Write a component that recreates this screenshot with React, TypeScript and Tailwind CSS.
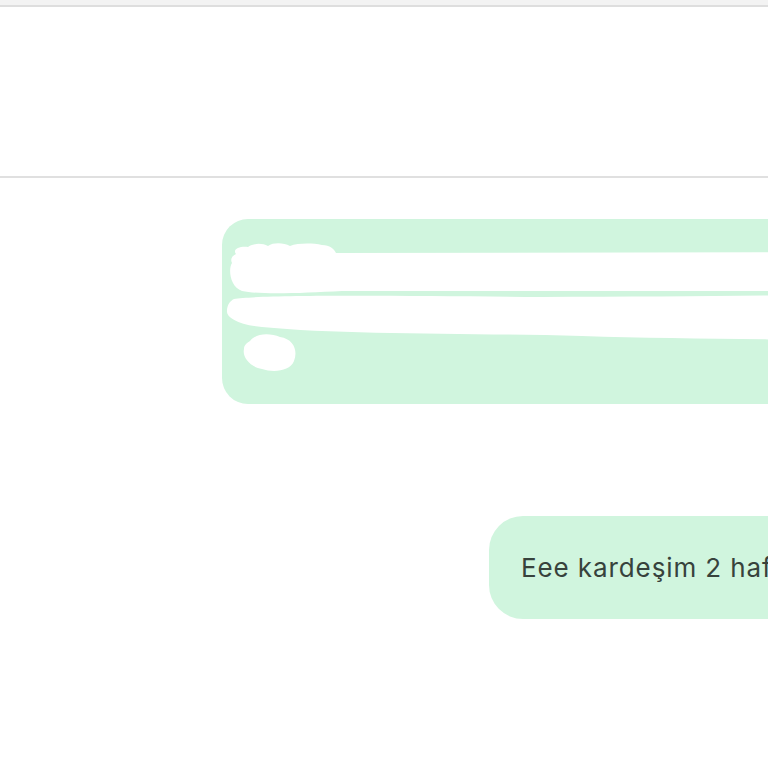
export default function App() {
  return (
    <div className="h-[768px] w-[768px] overflow-hidden bg-white font-['Inter',sans-serif]">
      {/* top bar */}
      <div className="h-[5px] bg-[#f3f3f3]" />
      <div className="h-[2px] bg-[#dedede]" />
      <div className="h-[169px] bg-white" />
      <div className="h-[2px] bg-[#e0e0e0]" />

      <div className="flex flex-col pt-[41px]">
        <div className="relative ml-[222px] h-[185px] w-[640px] shrink-0 rounded-[26px] bg-[#d0f5de]">
          <svg className="absolute left-0 top-0" width="640" height="185" viewBox="0 0 640 185">
            <g fill="#ffffff">
              <path d="M14 35 C 10 30 18 27 26 28 C 32 24 40 24 46 27 C 52 23 62 24 68 27 C 76 24 90 24 100 26 C 108 26 112 30 114 34 L 640 33 L 640 72 L 120 72 C 80 74 40 76 20 72 C 8 68 6 50 10 44 C 8 40 10 37 14 35 Z" />
              <path d="M12 80 C 40 75 200 77 320 78 C 450 78 560 76 640 76 L 640 122 C 560 120 450 120 360 117 C 250 114 120 116 40 108 C 16 106 4 98 5 92 C 5 86 8 82 12 80 Z" />
              <path d="M28 122 C 34 114 48 114 58 118 C 72 120 76 132 72 142 C 68 152 52 154 40 150 C 28 148 20 138 22 130 C 22 126 25 124 28 122 Z" />
            </g>
          </svg>
        </div>

        <div className="ml-[489px] mt-[112px] flex h-[103px] w-[420px] shrink-0 items-center rounded-[34px] bg-[#d0f5de] pl-[32px]">
          <span className="whitespace-nowrap text-[26px] tracking-[0.9px] text-[#37423c]">Eee kardeşim 2 hafta</span>
        </div>
      </div>
    </div>
  );
}
